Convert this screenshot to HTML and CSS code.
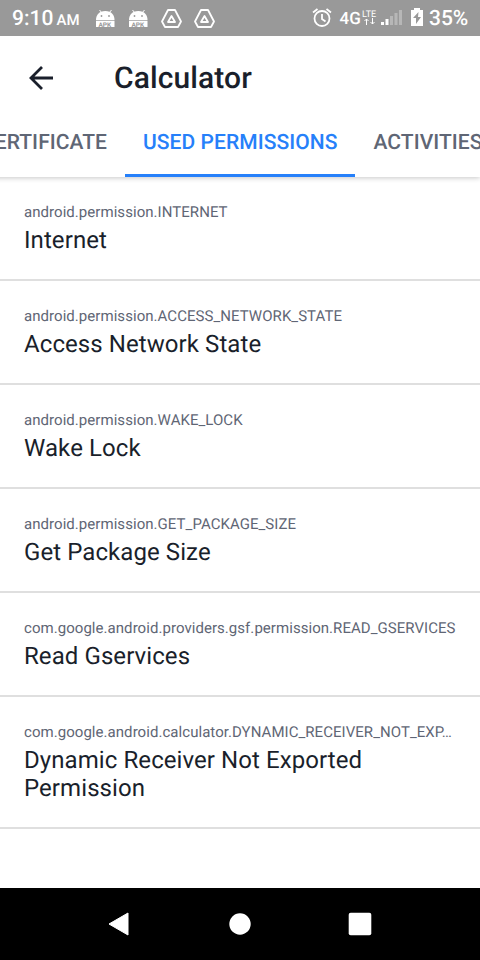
FILE: index.html
```html
<!DOCTYPE html>
<html lang="en">
<head>
<meta charset="utf-8">
<title>Calculator</title>
<link rel="stylesheet" href="styles.css">
</head>
<body>
<div class="status">
  <span class="time">9:10 <small>AM</small></span>
  <svg class="notif" viewBox="96 0 120 36">
    <g id="apk" fill="#fff">
      <path d="M96 20c0-5 3-9 9.300-9s9.200 4 9.200 9z"/>
      <path d="M99.500 10l2.500 3M111.500 10l-2.500 3" stroke="#fff" stroke-width="1"/>
      <path d="M96 20.700h18.500v6.300h-18.500z"/>
      <circle cx="101.500" cy="16" r=".9" fill="#999"/><circle cx="109" cy="16" r=".9" fill="#999"/>
      <text x="98.500" y="26.500" class="apk">APK</text>
    </g>
    <use href="#apk" x="33"/>
    <g id="drive" fill="none" stroke="#fff" stroke-width="1.800" stroke-linejoin="round">
      <path d="M168 10h7l6 11.500-3 5.500h-13l-3-5.500zM171.500 16l-3.500 6h7z"/>
    </g>
    <use href="#drive" x="33"/>
  </svg>
  <svg class="system" viewBox="312 0 114 36" fill="#fff">
    <g fill="none" stroke="#fff" stroke-width="1.800"><circle cx="322" cy="18.500" r="7.500"/><path d="M322 14v5l3.500 2.500M313 12.500l4.500-3.500M331 12.500l-4.500-3.500"/></g>
    <text x="339.500" y="24" class="net">4G</text><text x="362" y="17" class="lte">LTE</text>
    <path d="M366.500 25v-6M364.500 21l2-2 2 2M372.500 18v6M370.500 22l2 2 2-2" fill="none" stroke="#fff"/>
    <path d="M381 22h3v3h-3zM385.500 19h3v6h-3z"/>
    <path d="M390 16h3v9h-3zM394.500 13h3v12h-3zM399 10h3v15h-3z" opacity=".3"/>
    <path d="M411 10h3V8h6v2h3v16h-12z"/><path d="M418.500 12l-5.500 6h3v6l5-7h-3z" fill="#999"/>
  </svg>
  <span class="battery">35%</span>
</div>
<header class="bar">
  <svg class="back" viewBox="0 0 26 26"><path d="M25 13H3M14 2L3 13l11 11"/></svg>
  <h1>Calculator</h1>
</header>
<nav class="tabs"><a>CERTIFICATE</a><a class="active">USED PERMISSIONS</a><a>ACTIVITIES</a></nav>
<main>
  <section><p>android.permission.INTERNET</p><h2>Internet</h2></section>
  <section><p>android.permission.ACCESS_NETWORK_STATE</p><h2>Access Network State</h2></section>
  <section><p>android.permission.WAKE_LOCK</p><h2>Wake Lock</h2></section>
  <section><p>android.permission.GET_PACKAGE_SIZE</p><h2>Get Package Size</h2></section>
  <section><p>com.google.android.providers.gsf.permission.READ_GSERVICES</p><h2>Read Gservices</h2></section>
  <section><p>com.google.android.calculator.DYNAMIC_RECEIVER_NOT_EXP…</p><h2>Dynamic Receiver Not Exported Permission</h2></section>
</main>
<footer>
  <svg viewBox="0 0 24 24"><path d="M1 12L20 1v22z" stroke="#fff" stroke-linejoin="round"/></svg>
  <svg viewBox="0 0 24 24"><circle cx="12" cy="12" r="10.700"/></svg>
  <svg viewBox="0 0 24 24"><rect x=".7" y=".7" width="22.600" height="22.600" rx="2"/></svg>
</footer>
</body>
</html>
```
FILE: styles.css
```css
* { box-sizing: border-box; margin: 0; }
body { width: 480px; height: 960px; display: flex; flex-direction: column; overflow: hidden; background: #fff; color: #1a1f2b; font-family: Roboto, sans-serif; text-rendering: geometricPrecision; }
.status { height: 36px; flex: none; display: flex; align-items: center; background: #999; color: #fff; padding-left: 12px; font-weight: 500; font-size: 21px; }
.time, .battery { padding-top: 2px; }
.time { width: 84px; white-space: nowrap; }
.time small { font-size: 15px; margin-left: -2px; }
.notif { width: 120px; height: 36px; margin-right: 96px; flex: none; }
.system { width: 114px; height: 36px; margin-right: 3px; flex: none; }
.apk { font-size: 6.5px; font-weight: 700; fill: #999; }
.net { font-size: 17px; font-weight: 500; }
.lte { font-size: 9px; font-weight: 400; }
.bar { height: 84px; flex: none; display: flex; align-items: center; padding-left: 28px; }
.back { width: 26px; height: 26px; margin-bottom: 1px; fill: none; stroke: #1a1f2b; stroke-width: 2.8; }
h1 { margin-left: 60px; font-size: 30px; font-weight: 500; letter-spacing: .1px; }
.tabs { height: 57px; flex: none; display: flex; margin-left: -37px; position: relative; box-shadow: 0 1px 5px rgba(0, 0, 0, .22); clip-path: inset(0 0 -8px 0); }
.tabs a { flex: none; padding: 10px 18px 0; font-size: 21px; line-height: 26px; font-weight: 500; letter-spacing: .06px; color: #5f6675; border-bottom: 3px solid transparent; }
.tabs .active { color: #2680fa; border-color: #2680fa; }
main { flex: 1; }
section { padding: 25px 24px; border-bottom: 2px solid #dfdfdf; }
p { font-size: 15px; line-height: 20px; letter-spacing: .05px; color: #5f6675; white-space: nowrap; }
h2 { font-size: 24px; line-height: 28px; font-weight: 400; letter-spacing: .08px; margin-top: 4px; }
footer { height: 72px; flex: none; background: #000; display: flex; justify-content: center; align-items: center; gap: 96px; }
footer svg { width: 24px; height: 24px; fill: #fff; }
```
